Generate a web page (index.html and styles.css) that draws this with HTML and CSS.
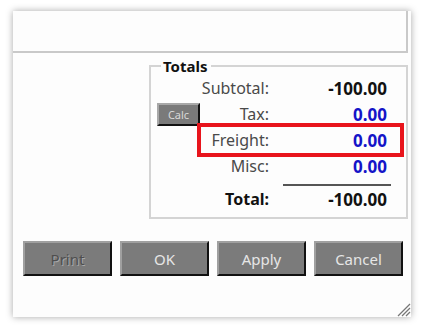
FILE: index.html
```html
<!DOCTYPE html>
<html lang="en">
<head>
    <meta charset="UTF-8">
    <title>Totals</title>
    <link rel="stylesheet" href="styles.css">
</head>
<body>

<div class="dialog">
    <div class="top-box"></div>

    <fieldset class="totals">
        <legend>Totals</legend>
        <div class="totals-grid">
            <div class="label row-subtotal">Subtotal:</div>
            <div class="value row-subtotal">-100.00</div>

            <button class="calc-btn">Calc</button>
            <div class="label">Tax:</div>
            <div class="value blue">0.00</div>

            <div class="label freight">Freight:</div>
            <div class="value blue">0.00</div>

            <div class="label">Misc:</div>
            <div class="value blue">0.00</div>

            <div class="separator"></div>

            <div class="label total">Total:</div>
            <div class="value">-100.00</div>
        </div>
        <div class="highlight"></div>
    </fieldset>

    <div class="buttons">
        <button class="btn disabled">Print</button>
        <button class="btn">OK</button>
        <button class="btn">Apply</button>
        <button class="btn">Cancel</button>
    </div>

    <svg class="grip" width="16" height="16" viewBox="0 0 16 16">
        <line x1="15" y1="3" x2="3" y2="15" stroke="#777" stroke-width="1.3"/>
        <line x1="15" y1="7" x2="7" y2="15" stroke="#777" stroke-width="1.3"/>
        <line x1="15" y1="11" x2="11" y2="15" stroke="#777" stroke-width="1.3"/>
    </svg>
</div>

</body>
</html>
```

FILE: styles.css
```css
body {
    margin: 0;
    padding: 11px 13px;
    background-color: #fff;
    font-family: 'Noto Sans', sans-serif;
}

.dialog {
    position: relative;
    width: 398px;
    height: 306px;
    background-color: #fdfdfd;
    box-shadow: 0 0 7px rgba(0, 0, 0, 0.35);
    display: flex;
    flex-direction: column;
}

.top-box {
    height: 40px;
    margin-right: 3px;
    border-right: 2px solid #c9c9c9;
    border-bottom: 2px solid #c9c9c9;
}

.totals {
    position: relative;
    margin: 4px 3px 0 136px;
    padding: 0 19px 6px 6px;
    border: 2px solid #d4d4d4;
}

.totals legend {
    padding: 0 4px 0 2px;
    margin-left: 4px;
    font-weight: bold;
    font-size: 15px;
    line-height: 18px;
    color: #111;
}

.totals-grid {
    display: grid;
    grid-template-columns: 43px 69px 1fr;
    grid-template-rows: 26px 26px 26px 26px 8px 24px;
    align-items: center;
    font-size: 16px;
}

.label {
    grid-column: 2;
    text-align: right;
    color: #4a4a4a;
    white-space: nowrap;
}

.value {
    grid-column: 3;
    text-align: right;
    font-weight: bold;
    font-size: 17px;
    color: #111;
}

.value.blue {
    color: #1414c8;
}

.label.total {
    font-weight: bold;
    color: #111;
}

.calc-btn {
    grid-column: 1;
    height: 23px;
    padding: 0;
    font-family: 'Noto Sans', sans-serif;
    font-size: 11px;
    color: #d8d8d8;
    background-color: #7a7a7a;
    border: 2px solid;
    border-color: #a8a8a8 #111 #111 #a8a8a8;
}

.separator {
    grid-column: 3;
    align-self: end;
    margin: 0 -4px 1px 14px;
    border-top: 2px solid #555;
}

.highlight {
    position: absolute;
    left: 46px;
    top: 48px;
    width: 199px;
    height: 26px;
    border: 4px solid #e8141c;
}

.buttons {
    display: flex;
    gap: 8px;
    margin: 22px 0 0 10px;
}

.btn {
    width: 89px;
    height: 35px;
    font-family: 'Noto Sans', sans-serif;
    font-size: 15px;
    color: #e6e6e6;
    background-color: #7b7b7b;
    border: 2px solid;
    border-color: #a0a0a0 #111 #111 #a0a0a0;
}

.btn.disabled {
    color: #4e4e4e;
    text-shadow: 1px 1px 0 #a8a8a8;
}

.grip {
    position: absolute;
    right: 0;
    bottom: 0;
}
```
